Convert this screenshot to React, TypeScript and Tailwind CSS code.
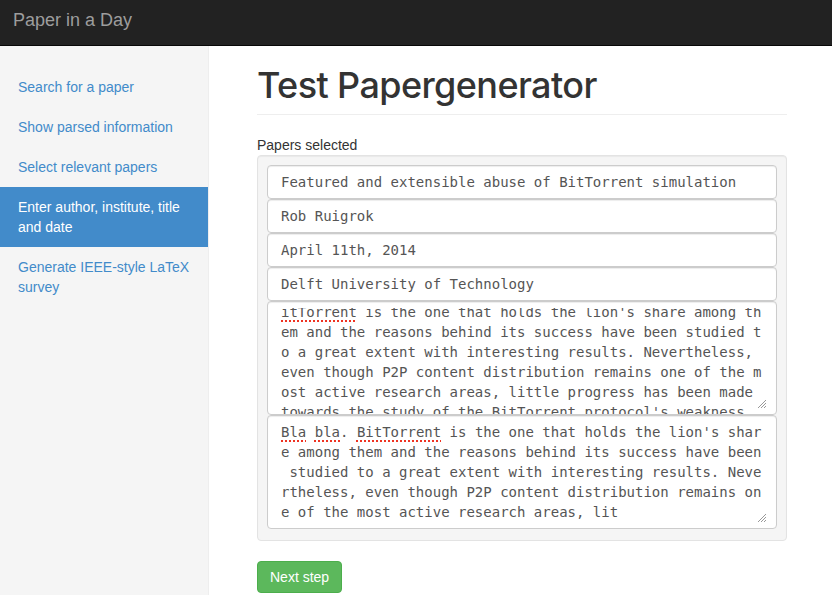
import React from 'react';

const sans = { fontFamily: '"Liberation Sans", Arial, sans-serif' };
const mono = { fontFamily: '"DejaVu Sans Mono", Menlo, monospace' };
const heading = { fontFamily: 'Inter, "Liberation Sans", Arial, sans-serif' };

const navItems = [
    'Search for a paper',
    'Show parsed information',
    'Select relevant papers',
    'Enter author, institute, title and date',
    'Generate IEEE-style LaTeX survey',
];

const Typo: React.FC<{ children: React.ReactNode }> = ({ children }) => (
    <span className="underline decoration-dotted decoration-[#e32] decoration-2 underline-offset-[3px]">{children}</span>
);

const Grip = () => (
    <svg className="absolute right-[9px] bottom-[5px]" width="10" height="10" viewBox="0 0 10 10">
        <path d="M1 9 L9 1 M4 9 L9 4 M7 9 L9 7" stroke="#999" strokeWidth="1" fill="none" />
    </svg>
);

const FakeTextarea: React.FC<{ lines: React.ReactNode[]; scrolled?: boolean }> = ({ lines, scrolled }) => (
    <div className="relative h-[114px] bg-white border border-[#ccc] rounded-[4px] shadow-[inset_0_1px_1px_rgba(0,0,0,0.075)] overflow-hidden">
        <div className={scrolled ? 'mt-[6px] h-[106px] overflow-hidden' : ''}>
            <div className={`px-[13px] ${scrolled ? '-mt-[6px]' : 'pt-[6px]'} text-[14px] leading-[20px] text-[#555]`} style={mono}>
                {lines.map((l, i) => (
                    <div key={i} className="whitespace-pre">{l}</div>
                ))}
            </div>
        </div>
        <Grip />
    </div>
);

const Input: React.FC<{ value: string }> = ({ value }) => (
    <div
        className="h-[34px] bg-white border border-[#ccc] rounded-[4px] shadow-[inset_0_1px_1px_rgba(0,0,0,0.075)] px-[13px] flex items-center text-[14px] text-[#555]"
        style={mono}
    >
        {value}
    </div>
);

export default function App() {
    return (
        <div className="min-h-[595px] flex flex-col bg-white" style={sans}>
            <header className="h-[46px] bg-[#222] border-b border-[#080808] flex items-center px-[13px] shrink-0">
                <span className="text-[18px] text-[#9d9d9d] -mt-[4px]">Paper in a Day</span>
            </header>
            <div className="flex flex-1">
                <aside className="w-[209px] shrink-0 bg-[#f5f5f5] border-r border-[#eee] pt-[21px]">
                    <ul>
                        {navItems.map((item, i) => (
                            <li
                                key={item}
                                className={`px-[18px] py-[10px] text-[14px] leading-[20px] ${i === 3 ? 'bg-[#428bca] text-white' : 'text-[#428bca]'}`}
                            >
                                {item}
                            </li>
                        ))}
                    </ul>
                </aside>
                <main className="flex-1 pl-[48px] pr-[45px] pt-[20px]">
                    <div className="pb-[9px] border-b border-[#eee]">
                        <h1 className="text-[36px] leading-[39px] font-medium tracking-[-0.6px] text-[#333]" style={heading}>
                            Test Papergenerator
                        </h1>
                    </div>
                    <label className="block mt-[20px] text-[14px] leading-[20px] text-[#333]">Papers selected</label>
                    <div className="bg-[#f5f5f5] border border-[#e3e3e3] rounded-[4px] pt-[9px] px-[9px] pb-[11px] flex flex-col shadow-[inset_0_1px_1px_rgba(0,0,0,0.05)]">
                        <Input value="Featured and extensible abuse of BitTorrent simulation" />
                        <Input value="Rob Ruigrok" />
                        <Input value="April 11th, 2014" />
                        <Input value="Delft University of Technology" />
                        <FakeTextarea
                            scrolled
                            lines={[
                                <>
                                    <Typo>itTorrent</Typo> is the one that holds the lion's share among th
                                </>,
                                'em and the reasons behind its success have been studied t',
                                'o a great extent with interesting results. Nevertheless, ',
                                'even though P2P content distribution remains one of the m',
                                'ost active research areas, little progress has been made ',
                                'towards the study of the BitTorrent protocol\'s weakness',
                            ]}
                        />
                        <FakeTextarea
                            lines={[
                                <>
                                    <Typo>Bla</Typo> <Typo>bla</Typo>. <Typo>BitTorrent</Typo> is the one that holds the lion's shar
                                </>,
                                'e among them and the reasons behind its success have been',
                                ' studied to a great extent with interesting results. Neve',
                                'rtheless, even though P2P content distribution remains on',
                                'e of the most active research areas, lit',
                            ]}
                        />
                    </div>
                    <button className="mt-[20px] h-[32px] px-[12px] bg-[#5cb85c] border border-[#4cae4c] rounded-[4px] text-white text-[14px]">
                        Next step
                    </button>
                </main>
            </div>
        </div>
    );
}
